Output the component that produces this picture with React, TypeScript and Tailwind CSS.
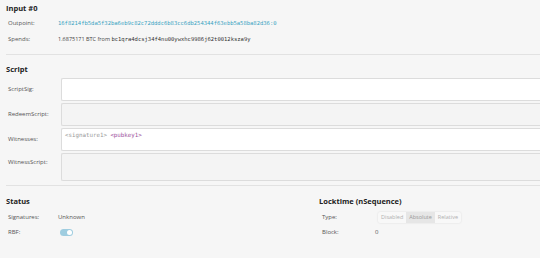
import { ReactNode } from 'react'

const MONO = "font-['DejaVu_Sans_Mono',monospace]"

function Row({ label, children }: { label: string; children: ReactNode }) {
  return (
    <div className="flex items-center h-[16px]">
      <div className="w-[52px] pl-[2px] text-[#555]">{label}</div>
      <div className="flex items-center">{children}</div>
    </div>
  )
}

function Field({ label, disabled, h, top, children }: { label: string; disabled?: boolean; h: string; top?: boolean; children?: ReactNode }) {
  return (
    <div className={`flex ${top ? 'items-start' : 'items-center'} ${h}`}>
      <div className={`w-[55px] shrink-0 pl-[2px] text-[#555] ${top ? 'pt-[5px]' : ''}`}>{label}</div>
      <div
        className={`flex-1 h-full border border-r-0 border-[#dcdcdc] rounded-l-[2px] px-[3px] py-[2px] ${
          disabled ? 'bg-[#f4f4f4]' : 'bg-white'
        }`}
      >
        {children}
      </div>
    </div>
  )
}

export default function App() {
  return (
    <div className="w-[540px] h-[258px] overflow-hidden bg-[#f6f6f6] font-['Open_Sans',sans-serif] text-[6px] text-[#333] pl-[6px]">
      {/* Input */}
      <section className="pt-[3px]">
        <h2 className="text-[7.5px] font-bold text-[#222] h-[10px] leading-[10px]">Input #0</h2>
        <div className="pt-[2px]">
          <Row label="Outpoint:">
            <span className={`${MONO} text-[5.5px] text-[#3aa3c2]`}>
              16f8214fb5da5f32ba6eb9c82c72dddc6b83cc6db254344f63ebb5a58ba82d36:0
            </span>
          </Row>
          <Row label="Spends:">
            <span className="text-[5.5px] text-[#444]">1.6875171 BTC from&nbsp;</span>
            <span className={`${MONO} text-[5.5px] text-[#333]`}>bc1qra4dcsj34f4nu00ywxhc9986j62t0012ksza9y</span>
          </Row>
        </div>
      </section>

      <div className="h-px bg-[#e2e2e2] mt-[7px]" />

      {/* Script */}
      <section>
        <h2 className="text-[7.5px] font-bold text-[#222] h-[10px] leading-[10px] mt-[9px]">Script</h2>
        <div className="mt-[4px] flex flex-col gap-[2px]">
          <Field label="ScriptSig:" h="h-[23px]" />
          <Field label="RedeemScript:" h="h-[23px]" disabled />
          <Field label="Witnesses:" h="h-[23px]">
            <div className={`${MONO} text-[5.8px] leading-[8px] text-[#999]`}>
              &lt;signature1&gt; <span className="text-[#9b4f9b]">&lt;pubkey1&gt;</span>
            </div>
          </Field>
          <Field label="WitnessScript:" h="h-[28px]" top disabled />
        </div>
      </section>

      <div className="h-px bg-[#e2e2e2] mt-[4px]" />

      {/* Status / Locktime */}
      <div className="flex">
        <section className="w-[313px]">
          <h2 className="text-[7.5px] font-bold text-[#222] h-[10px] leading-[10px] mt-[10px]">Status</h2>
          <div className="pt-[4px]">
            <div className="flex items-center h-[15px]">
              <div className="w-[52px] pl-[2px] text-[#555]">Signatures:</div>
              <span className="text-[#555]">Unknown</span>
            </div>
            <div className="flex items-center h-[15px]">
              <div className="w-[54px] pl-[2px] text-[#555]">RBF:</div>
              <div className="w-[13px] h-[7px] rounded-full bg-[#9fcde0] flex justify-end items-center pr-[1px]">
                <div className="w-[5px] h-[5px] rounded-full bg-white" />
              </div>
            </div>
          </div>
        </section>
        <section>
          <h2 className="text-[7.5px] font-bold text-[#222] h-[10px] leading-[10px] mt-[10px]">Locktime (nSequence)</h2>
          <div className="pt-[4px]">
            <div className="flex items-center h-[15px]">
              <div className="w-[59px] pl-[3px] text-[#555]">Type:</div>
              <div className="flex text-[5.5px] text-[#b0b0b0] rounded-[2px] shadow-[0_0_2px_rgba(0,0,0,0.12)] bg-[#f8f8f8]">
                <span className="px-[3px] py-[1px]">Disabled</span>
                <span className="px-[3px] py-[1px] bg-[#e6e6e6] text-[#999]">Absolute</span>
                <span className="px-[3px] py-[1px]">Relative</span>
              </div>
            </div>
            <div className="flex items-center h-[15px]">
              <div className="w-[56px] pl-[3px] text-[#555]">Block:</div>
              <span className="text-[#555]">0</span>
            </div>
          </div>
        </section>
      </div>
    </div>
  )
}
